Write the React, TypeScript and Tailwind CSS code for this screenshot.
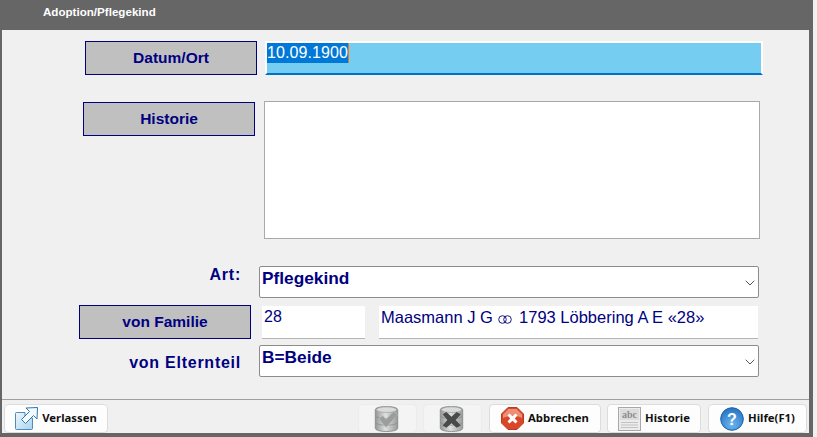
import { ChevronDown } from 'lucide-react';
import type { ReactNode } from 'react';

const SANS = "font-['Liberation_Sans',Arial,sans-serif]";

function LabelBox({ children, className }: { children: ReactNode; className: string }) {
  return (
    <div
      className={`flex h-[34px] w-[172px] shrink-0 items-center justify-center border border-[#000080] bg-[#c0c0c0] text-[15.5px] font-bold text-[#000080] ${className}`}
    >
      {children}
    </div>
  );
}

function SelectBox({ value }: { value: string }) {
  return (
    <div className="flex h-[32px] w-[500px] items-start justify-between rounded-[2px] border border-[#8c8c8c] bg-white pl-[2px]">
      <span className="pt-[1px] text-[17.3px] leading-[20px] font-bold text-[#000080]">{value}</span>
      <ChevronDown size={16} strokeWidth={1.5} className="mt-[8px] text-[#555]" />
    </div>
  );
}

function RingsIcon() {
  return (
    <svg width="14" height="9" viewBox="0 0 14 9" className="ml-[1px] mr-[2px] inline-block align-[-1px]">
      <circle cx="4.5" cy="4.5" r="3.8" fill="none" stroke="#000080" strokeWidth="0.9" />
      <circle cx="9.5" cy="4.5" r="3.8" fill="none" stroke="#000080" strokeWidth="0.9" />
    </svg>
  );
}

function ExitIcon() {
  return (
    <svg width="23" height="23" viewBox="0 0 23 23" className="shrink-0">
      <defs>
        <linearGradient id="exitFill" x1="0" y1="0" x2="1" y2="1">
          <stop offset="0" stopColor="#eef7fd" />
          <stop offset="1" stopColor="#a9d3f0" />
        </linearGradient>
      </defs>
      <path d="M0.5 6.5 Q0.5 5.5 1.5 5.5 L10 5.5 L10 11 L17.5 11 L17.5 21.5 Q17.5 22.5 16.5 22.5 L1.5 22.5 Q0.5 22.5 0.5 21.5 Z" fill="url(#exitFill)" stroke="#4f8ab8" />
      <path d="M22.5 0.5 L11 1 L14.5 4.5 L6.5 12.5 L10.5 16.5 L18.5 8.5 L22 12 Z" fill="#f4fafe" stroke="#2b78ae" strokeLinejoin="round" />
    </svg>
  );
}

function DbIcon({ mark }: { mark: 'check' | 'cross' }) {
  return (
    <svg width="25" height="28" viewBox="0 0 26 30" className="mr-[3px] shrink-0">
      <defs>
        <linearGradient id={`db-${mark}`} x1="0" y1="0" x2="1" y2="0">
          <stop offset="0" stopColor="#949796" />
          <stop offset="0.45" stopColor="#dfe1e0" />
          <stop offset="1" stopColor="#989b9a" />
        </linearGradient>
      </defs>
      <path d="M1 5 C1 0.5 25 0.5 25 5 L25 25 C25 29.5 1 29.5 1 25 Z" fill={`url(#db-${mark})`} stroke="#8a8c8b" />
      <ellipse cx="13" cy="5" rx="11" ry="3" fill="#d9dbda" stroke="#999" strokeWidth="0.7" />
      <path d="M1 12 C4 15.5 22 15.5 25 12 M1 19 C4 22.5 22 22.5 25 19" fill="none" stroke="#8a8c8b" strokeWidth="0.8" />
      {mark === 'check' ? (
        <path d="M5 15 L9 11.5 L12.5 15.5 L20.5 7 L25 10.5 L12.5 24 Z" fill="#9a9d9b" stroke="#b9bbba" strokeWidth="0.7" />
      ) : (
        <path d="M3.5 10 L7.5 7.5 L13 12.5 L18.5 7.5 L23 10 L17.5 16 L23 22 L18.5 24.5 L13 19.5 L7.5 24.5 L3.5 22 L8.5 16 Z" fill="#4a4a4a" />
      )}
    </svg>
  );
}

function StopIcon() {
  return (
    <svg width="23" height="23" viewBox="0 0 23 23" className="shrink-0">
      <path d="M7 0.5 L16 0.5 L22.5 7 L22.5 16 L16 22.5 L7 22.5 L0.5 16 L0.5 7 Z" fill="#d9472b" stroke="#bb3a22" strokeLinejoin="round" />
      <path d="M7.5 2 L15.5 2 L21 7.5 L21 11 C15 8 8 8 2 11 L2 7.5 Z" fill="#ee8f75" />
      <path d="M6.5 8.5 L8.5 6.5 L11.5 9.3 L14.5 6.5 L16.5 8.5 L13.7 11.5 L16.5 14.5 L14.5 16.5 L11.5 13.7 L8.5 16.5 L6.5 14.5 L9.3 11.5 Z" fill="#fff" />
    </svg>
  );
}

function AbcIcon() {
  return (
    <svg width="23" height="24" viewBox="0 0 23 24" className="shrink-0">
      <rect x="0.5" y="0.5" width="22" height="23" fill="#ececec" stroke="#a8a8a8" />
      <rect x="2" y="2" width="19" height="11" fill="#dcdcdc" />
      <text x="11.5" y="11" textAnchor="middle" fontSize="10" fontFamily="'Liberation Serif', serif" fill="#8d8d8d">abc</text>
      <path d="M3 15.5 H20 M3 18 H20 M3 20.5 H20" stroke="#c2c2c2" />
    </svg>
  );
}

function HelpIcon() {
  return (
    <svg width="24" height="24" viewBox="0 0 24 24" className="shrink-0">
      <defs>
        <radialGradient id="helpFill" cx="0.5" cy="0.75" r="0.8">
          <stop offset="0" stopColor="#6db5ee" />
          <stop offset="1" stopColor="#1f6fc0" />
        </radialGradient>
      </defs>
      <circle cx="12" cy="12" r="11.3" fill="url(#helpFill)" stroke="#1c5fa6" />
      <text x="12" y="17.5" textAnchor="middle" fontSize="16" fontWeight="700" fontFamily="'Liberation Sans', sans-serif" fill="#fff">?</text>
    </svg>
  );
}

function ToolButton({ icon, label, className }: { icon: ReactNode; label: string; className: string }) {
  return (
    <button className={`flex h-[29px] items-center justify-center gap-[4px] rounded-[4px] border border-[#dcdcdc] bg-[#fdfdfd] font-['Noto_Sans',sans-serif] text-[11.3px] font-bold text-[#111] ${className}`}>
      {icon}
      {label}
    </button>
  );
}

function GhostButton({ mark, className }: { mark: 'check' | 'cross'; className: string }) {
  return (
    <button disabled className={`flex h-[29px] w-[59px] items-center justify-center rounded-[4px] border border-[#ececec] bg-[#f4f4f4] ${className}`}>
      <DbIcon mark={mark} />
    </button>
  );
}

export default function App() {
  return (
    <div className={`h-[437px] w-[817px] overflow-hidden bg-[#f0f0f0] ${SANS}`}>
      <div className="flex h-[437px] w-[813px] flex-col border-x-2 border-b-4 border-[#666666] border-r-4 bg-[#f0f0f0]">
        {/* Title bar */}
        <div className="-mx-[2px] flex h-[30px] shrink-0 items-start bg-[#666666] pl-[43px] pt-[5px] text-[11.6px] leading-[14px] font-bold text-white">
          Adoption/Pflegekind
        </div>

        {/* Form */}
        <div className="flex grow flex-col">
          <div className="ml-[83px] mt-[11px] flex">
            <LabelBox className="h-[34px] w-[171px]">Datum/Ort</LabelBox>
            <div className="ml-[8px] h-[34px] w-[498px] border-b-2 border-[#0072c6] border-t-2 border-x-2 border-x-white border-t-white bg-[#75cdf2] text-[16px] leading-[20px] tracking-[0.1px]">
              <span className="inline-block border-r border-[#e8771f] bg-[#0078d7] text-white">10.09.1900</span>
            </div>
          </div>

          <div className="ml-[81px] mt-[26px] flex items-start">
            <LabelBox className="mt-[1px]">Historie</LabelBox>
            <div className="ml-[9px] h-[138px] w-[496px] border border-[#a9a9a9] bg-white" />
          </div>

          <div className="mt-[27px] flex items-start">
            <div className="mr-[18px] w-[239px] text-right text-[16px] leading-[18px] font-bold tracking-[0.75px] text-[#000080]">Art:</div>
            <SelectBox value="Pflegekind" />
          </div>

          <div className="ml-[77px] mt-[7px] flex items-start">
            <LabelBox className="">von Familie</LabelBox>
            <div className="ml-[11px] mt-[1px] h-[33px] w-[103px] border-b border-[#b4b4b4] bg-white pl-[2px] text-[16px] leading-[22px] text-[#000080]">28</div>
            <div className="ml-[14px] mt-[1px] h-[33px] w-[379px] border-b border-[#b4b4b4] bg-white pl-[2px] text-[16.5px] leading-[22px] text-[#000080]">
              Maasmann J G <RingsIcon /> 1793 Löbbering A E «28»
            </div>
          </div>

          <div className="mt-[6px] flex items-start">
            <div className="mr-[18px] w-[239px] pt-[8px] text-right text-[16px] leading-[20px] font-bold tracking-[0.75px] text-[#000080]">von Elternteil</div>
            <SelectBox value="B=Beide" />
          </div>
        </div>

        {/* Footer buttons */}
        <div className="flex h-[34px] shrink-0 items-start border-t border-[#a0a0a0] pt-[4px]">
          <ToolButton icon={<ExitIcon />} label="Verlassen" className="ml-[2px] w-[104px]" />
          <GhostButton mark="check" className="ml-[250px]" />
          <GhostButton mark="cross" className="ml-[6px]" />
          <ToolButton icon={<StopIcon />} label="Abbrechen" className="ml-[7px] w-[112px]" />
          <ToolButton icon={<AbcIcon />} label="Historie" className="ml-[6px] w-[94px]" />
          <ToolButton icon={<HelpIcon />} label="Hilfe(F1)" className="ml-[7px] w-[99px]" />
        </div>
      </div>
    </div>
  );
}
